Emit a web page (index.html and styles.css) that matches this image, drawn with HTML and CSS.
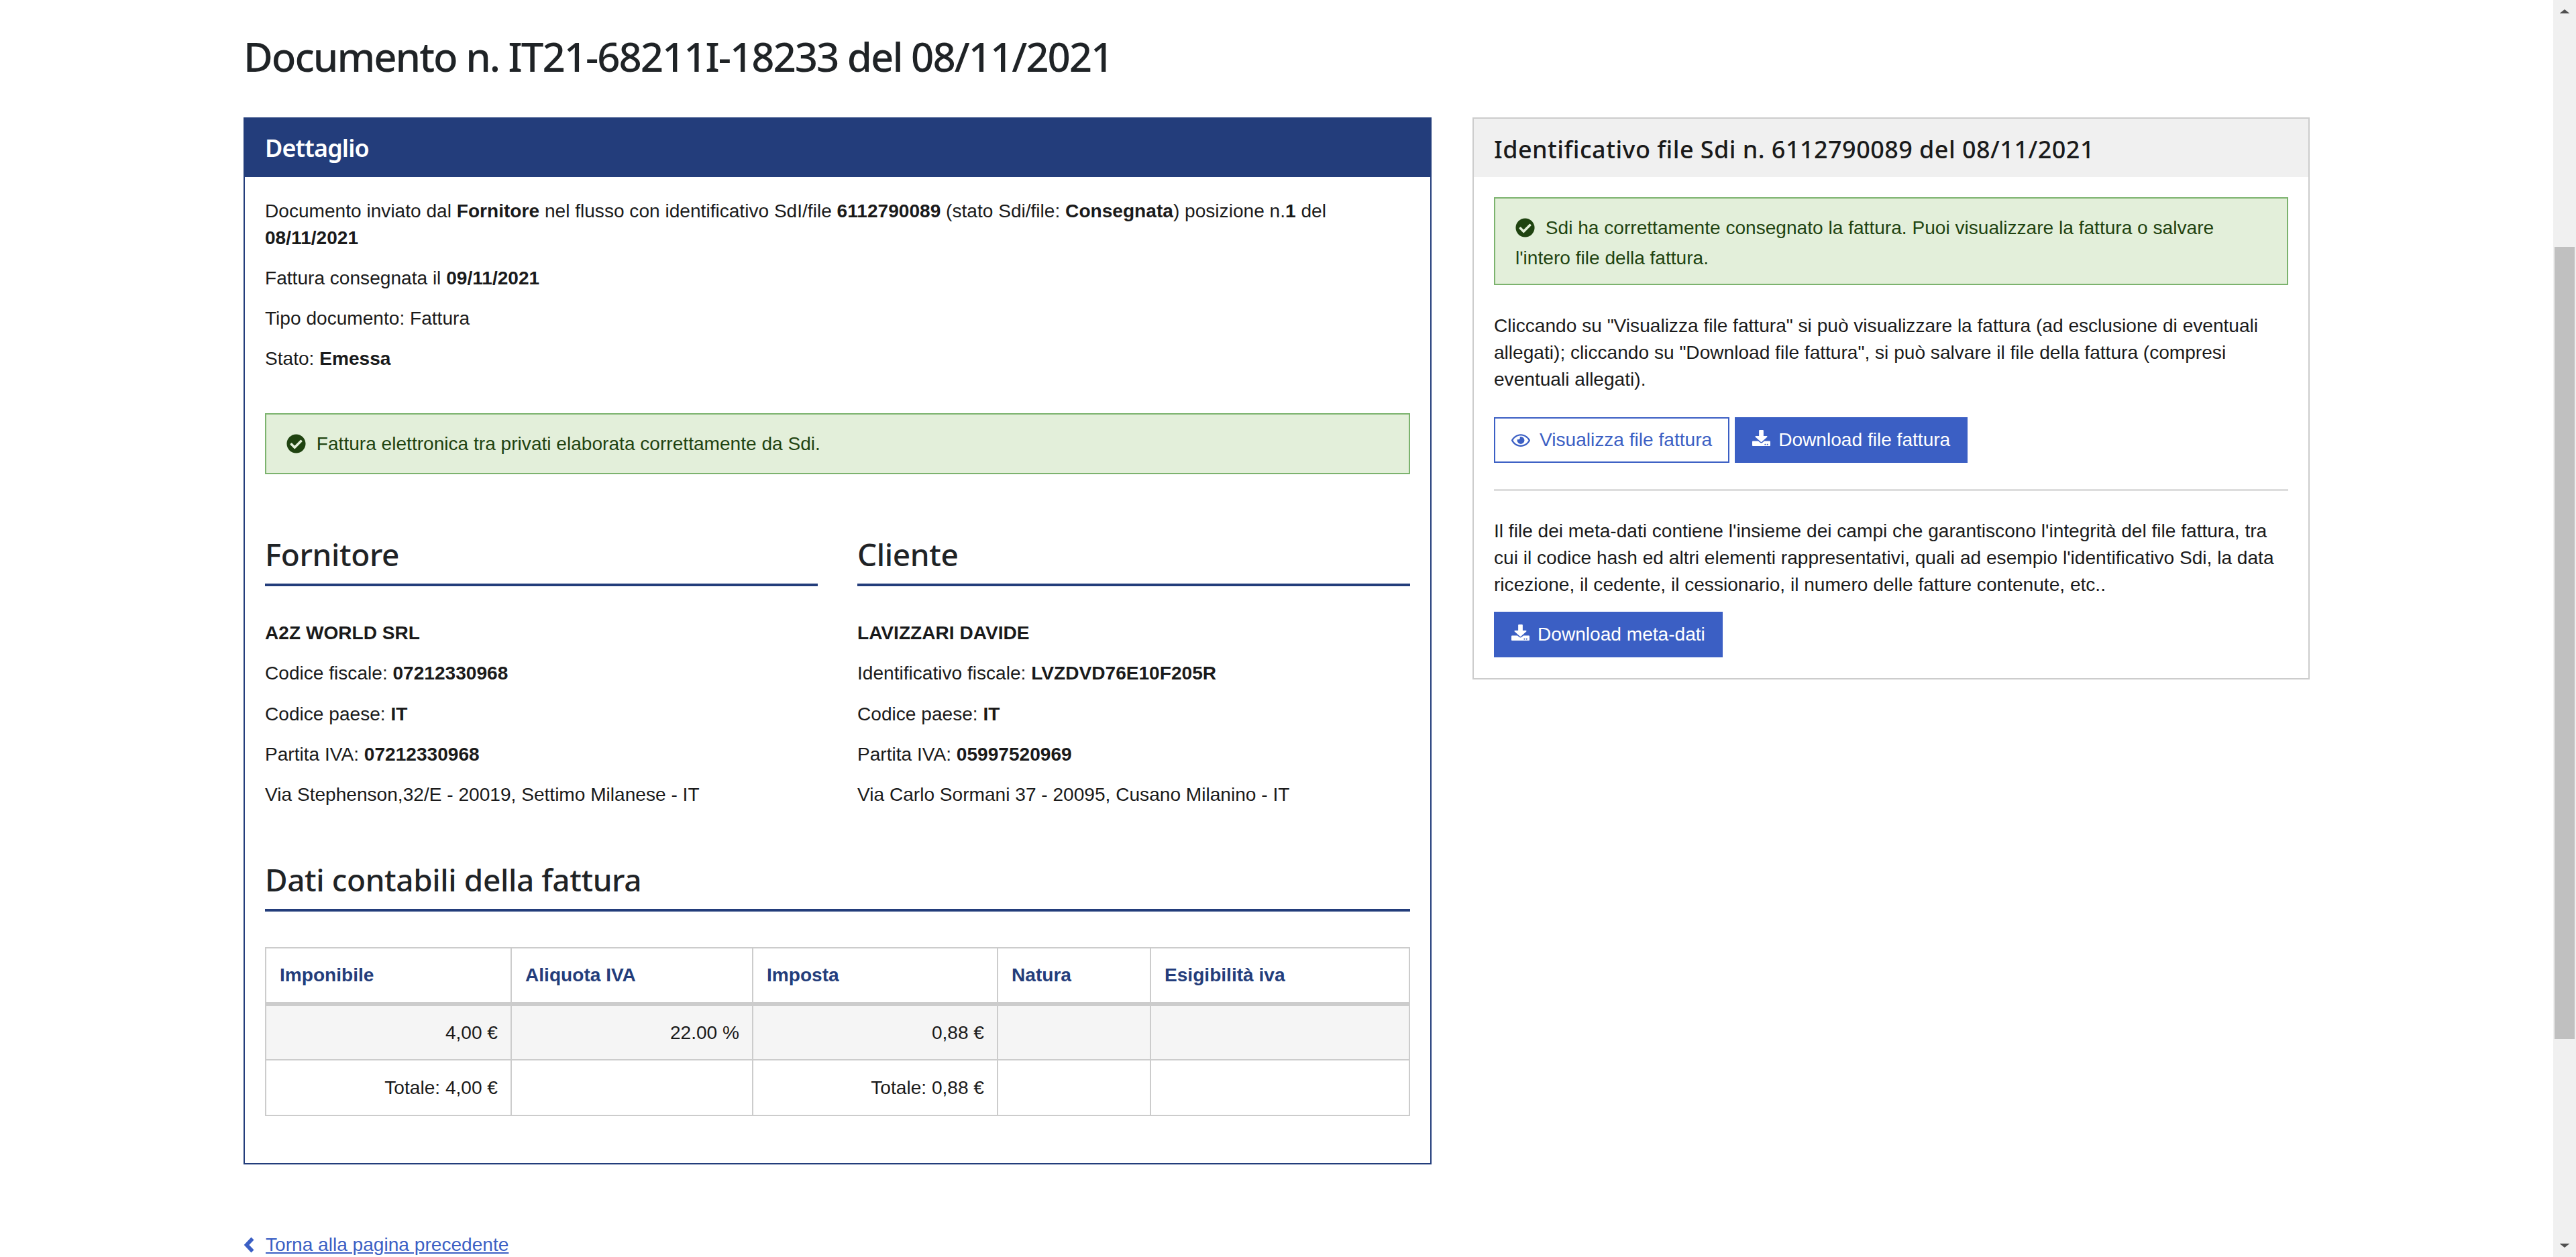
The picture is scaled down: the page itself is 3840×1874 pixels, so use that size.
FILE: index.html
```html
<!DOCTYPE html>
<html lang="it">
<head>
<meta charset="utf-8">
<title>Documento</title>
<link rel="stylesheet" href="styles.css">
</head>
<body>
<main class="page">
  <h1 class="title">Documento n. IT21-68211I-18233 del 08/11/2021</h1>
  <div class="columns">
    <section class="panel panel-main">
      <h2 class="panel-head">Dettaglio</h2>
      <div class="panel-body">
        <p>Documento inviato dal <b>Fornitore</b> nel flusso con identificativo SdI/file <b>6112790089</b> (stato Sdi/file: <b>Consegnata</b>) posizione n.<b>1</b> del <b>08/11/2021</b></p>
        <p>Fattura consegnata il <b>09/11/2021</b></p>
        <p>Tipo documento: Fattura</p>
        <p>Stato: <b>Emessa</b></p>
        <div class="alert alert-main">
          <svg class="icon icon-check" viewBox="0 0 512 512"><path d="M504 256c0 136.967-111.033 248-248 248S8 392.967 8 256 119.033 8 256 8s248 111.033 248 248zM227.314 387.314l184-184c6.248-6.248 6.248-16.379 0-22.627l-22.627-22.627c-6.248-6.249-16.379-6.249-22.628 0L216 308.118l-70.059-70.059c-6.248-6.248-16.379-6.248-22.628 0l-22.627 22.627c-6.248 6.248-6.248 16.379 0 22.627l104 104c6.249 6.249 16.379 6.249 22.628.001z"/></svg>
          Fattura elettronica tra privati elaborata correttamente da Sdi.
        </div>
        <div class="parties">
          <div class="party">
            <h3 class="section-title">Fornitore</h3>
            <p><b>A2Z WORLD SRL</b></p>
            <p>Codice fiscale: <b>07212330968</b></p>
            <p>Codice paese: <b>IT</b></p>
            <p>Partita IVA: <b>07212330968</b></p>
            <p>Via Stephenson,32/E - 20019, Settimo Milanese - IT</p>
          </div>
          <div class="party">
            <h3 class="section-title">Cliente</h3>
            <p><b>LAVIZZARI DAVIDE</b></p>
            <p>Identificativo fiscale: <b>LVZDVD76E10F205R</b></p>
            <p>Codice paese: <b>IT</b></p>
            <p>Partita IVA: <b>05997520969</b></p>
            <p>Via Carlo Sormani 37 - 20095, Cusano Milanino - IT</p>
          </div>
        </div>
        <h3 class="section-title section-accounts">Dati contabili della fattura</h3>
        <table class="data-table">
          <colgroup><col class="c1"><col class="c2"><col class="c3"><col class="c4"><col class="c5"></colgroup>
          <thead>
            <tr><th>Imponibile</th><th>Aliquota IVA</th><th>Imposta</th><th>Natura</th><th>Esigibilità iva</th></tr>
          </thead>
          <tbody>
            <tr class="odd"><td>4,00 €</td><td>22.00 %</td><td>0,88 €</td><td></td><td></td></tr>
            <tr><td>Totale: 4,00 €</td><td></td><td>Totale: 0,88 €</td><td></td><td></td></tr>
          </tbody>
        </table>
      </div>
    </section>
    <section class="panel panel-side">
      <h2 class="panel-head">Identificativo file Sdi n. 6112790089 del 08/11/2021</h2>
      <div class="panel-body">
        <div class="alert alert-side">
          <svg class="icon icon-check" viewBox="0 0 512 512"><path d="M504 256c0 136.967-111.033 248-248 248S8 392.967 8 256 119.033 8 256 8s248 111.033 248 248zM227.314 387.314l184-184c6.248-6.248 6.248-16.379 0-22.627l-22.627-22.627c-6.248-6.249-16.379-6.249-22.628 0L216 308.118l-70.059-70.059c-6.248-6.248-16.379-6.248-22.628 0l-22.627 22.627c-6.248 6.248-6.248 16.379 0 22.627l104 104c6.249 6.249 16.379 6.249 22.628.001z"/></svg>
          Sdi ha correttamente consegnato la fattura. Puoi visualizzare la fattura o salvare l'intero file della fattura.
        </div>
        <p>Cliccando su "Visualizza file fattura" si può visualizzare la fattura (ad esclusione di eventuali allegati); cliccando su "Download file fattura", si può salvare il file della fattura (compresi eventuali allegati).</p>
        <div class="actions">
          <a class="btn btn-outline" href="#"><svg class="icon icon-eye" viewBox="0 0 576 512" preserveAspectRatio="none"><path d="M288 144a110.94 110.94 0 0 0-31.24 5 55.4 55.4 0 0 1 7.24 27 56 56 0 0 1-56 56 55.4 55.4 0 0 1-27-7.24A111.71 111.71 0 1 0 288 144zm284.52 97.4C518.29 135.59 410.93 64 288 64S57.68 135.64 3.48 241.41a32.35 32.35 0 0 0 0 29.19C57.71 376.41 165.07 448 288 448s230.32-71.64 284.52-177.41a32.35 32.35 0 0 0 0-29.19zM288 400c-98.65 0-189.09-55-237.93-144C98.91 167 189.34 112 288 112s189.09 55 237.93 144C477.1 345 386.66 400 288 400z"/></svg>Visualizza file fattura</a>
          <a class="btn btn-solid" href="#"><svg class="icon icon-dl" viewBox="0 0 512 512" preserveAspectRatio="none"><path d="M216 0h80c13.3 0 24 10.7 24 24v168h87.7c17.8 0 26.7 21.5 14.1 34.1L269.7 378.3c-7.5 7.5-19.8 7.5-27.3 0L90.1 226.1c-12.6-12.6-3.7-34.1 14.1-34.1H192V24c0-13.3 10.7-24 24-24zm296 376v112c0 13.3-10.7 24-24 24H24c-13.3 0-24-10.7-24-24V376c0-13.3 10.7-24 24-24h146.7l49 49c20.1 20.1 52.5 20.1 72.6 0l49-49H488c13.3 0 24 10.7 24 24zm-124 88c0-11-9-20-20-20s-20 9-20 20 9 20 20 20 20-9 20-20zm64 0c0-11-9-20-20-20s-20 9-20 20 9 20 20 20 20-9 20-20z"/></svg>Download file fattura</a>
        </div>
        <hr class="divider">
        <p>Il file dei meta-dati contiene l'insieme dei campi che garantiscono l'integrità del file fattura, tra cui il codice hash ed altri elementi rappresentativi, quali ad esempio l'identificativo Sdi, la data ricezione, il cedente, il cessionario, il numero delle fatture contenute, etc..</p>
        <div class="actions actions-meta">
          <a class="btn btn-solid" href="#"><svg class="icon icon-dl" viewBox="0 0 512 512" preserveAspectRatio="none"><path d="M216 0h80c13.3 0 24 10.7 24 24v168h87.7c17.8 0 26.7 21.5 14.1 34.1L269.7 378.3c-7.5 7.5-19.8 7.5-27.3 0L90.1 226.1c-12.6-12.6-3.7-34.1 14.1-34.1H192V24c0-13.3 10.7-24 24-24zm296 376v112c0 13.3-10.7 24-24 24H24c-13.3 0-24-10.7-24-24V376c0-13.3 10.7-24 24-24h146.7l49 49c20.1 20.1 52.5 20.1 72.6 0l49-49H488c13.3 0 24 10.7 24 24zm-124 88c0-11-9-20-20-20s-20 9-20 20 9 20 20 20 20-9 20-20zm64 0c0-11-9-20-20-20s-20 9-20 20 9 20 20 20 20-9 20-20z"/></svg>Download meta-dati</a>
        </div>
      </div>
    </section>
  </div>
  <div class="back">
    <svg class="icon icon-back" viewBox="0 0 17 24"><path d="M13.5 2.500 4.500 12l9 9.500" fill="none" stroke="currentColor" stroke-width="5.500"/></svg>
    <a href="#">Torna alla pagina precedente</a>
  </div>
</main>
<aside class="scrollbar">
  <span class="arrow arrow-up"></span>
  <span class="thumb"></span>
  <span class="arrow arrow-down"></span>
</aside>
</body>
</html>
```
FILE: styles.css
```css
* { box-sizing: border-box; }
html, body { height: 100%; }
body {
  margin: 0;
  display: flex;
  height: 1874px;
  overflow: hidden;
  background: #fff;
  color: #1a1a1a;
  font-family: "Liberation Sans", Arial, sans-serif;
  font-size: 28.1px;
  line-height: 40px;
}
.page { flex: 1; min-width: 0; padding: 0 363px 0 363px; }
p { margin: 0 0 20px; }
b { font-weight: 700; }
.title {
  margin: 0;
  height: 175px;
  padding-top: 48px;
  font-family: "Noto Sans", sans-serif;
  font-weight: 500;
  font-size: 60px;
  line-height: 72px;
  letter-spacing: -2.05px;
  color: #1f2326;
}
.columns { display: flex; gap: 61px; align-items: flex-start; }
.panel { border: 2px solid #ccc; }
.panel-main { width: 1771px; height: 1561px; border-color: #233d7b; }
.panel-side { width: 1248px; }
.panel-head {
  margin: 0;
  height: 87px;
  padding: 0 30px;
  font-family: "Noto Sans", sans-serif;
  font-weight: 500;
  font-size: 36px;
  line-height: 91px;
  letter-spacing: 0.45px;
}
.panel-main .panel-head { background: #233d7b; color: #fff; margin: -2px -2px 0; height: 89px; padding: 0 32px; font-weight: 600; line-height: 92px; letter-spacing: -0.9px; }
.panel-side .panel-head { background: #f0f0f0; color: #1a1a1a; }
.panel-body { padding: 30px 30px 31px; }
.panel-main .panel-body { padding-top: 31px; }
.alert {
  border: 2px solid #7cb36e;
  background: #e3efda;
  color: #1f4310;
}
.alert-main { margin-top: 61px; height: 91px; padding: 24px 30px; margin-bottom: 0; }
.alert-side { height: 131px; padding: 22px 30px; line-height: 44.5px; margin-bottom: 41px; }
.icon { display: inline-block; vertical-align: middle; fill: currentColor; }
.icon-check { width: 29px; height: 29px; margin: -4px 8px 0 0; }
.icon-eye { width: 28px; height: 25px; margin: -3px 14px 0 0; }
.icon-dl { width: 27px; height: 24px; margin: -10px 12px 0 0; }
.parties { display: flex; gap: 59px; margin-top: 90px; }
.party { flex: 1; }
.party p { margin-bottom: 20.3px; }
.section-title {
  margin: 0 0 50px;
  height: 77px;
  border-bottom: 4px solid #233d7b;
  font-family: "Noto Sans", sans-serif;
  font-weight: 500;
  font-size: 46px;
  line-height: 58px;
  letter-spacing: -0.42px;
  color: #1f2326;
}
.section-accounts { margin: 57px 0 53px; height: 77px; }
.data-table {
  width: 100%;
  table-layout: fixed;
  border-collapse: collapse;
}
.c1 { width: 366px; }
.c2 { width: 360px; }
.c3 { width: 365px; }
.c4 { width: 228px; }
.data-table th, .data-table td { border: 2px solid #ccc; padding: 0 20px; }
.data-table th {
  height: 84px;
  text-align: left;
  font-weight: 700;
  color: #233d7b;
  border-bottom: 6px solid #ccc;
}
.data-table td { height: 83px; text-align: right; padding: 0 19px; }
.odd td { background: #f5f5f5; }
.btn {
  display: inline-block;
  height: 68px;
  padding: 0 24px;
  border: 2px solid #3b5fc4;
  line-height: 63px;
  text-decoration: none;
}
.btn-outline { background: #fff; color: #3b5fc4; }
.btn-solid { background: #3b5fc4; color: #fff; }
.actions { display: flex; gap: 8px; margin-top: 36px; }
.actions-meta { margin-top: 0; }
.divider { margin: 39px 0 40px; border: 0; border-top: 3px solid #ddd; }
.back { margin-top: 100px; display: flex; align-items: center; gap: 16px; color: #3b5fc4; }
.back a { color: #3b5fc4; }
.icon-back { width: 17px; height: 24px; margin: 0; }
.scrollbar {
  flex: 0 0 34px;
  display: flex;
  flex-direction: column;
  align-items: center;
  background: #f0f0f0;
  padding: 0 2px;
}
.thumb { width: 30px; height: 1181px; margin-top: 348px; background: #c0c0c0; }
.arrow { width: 15px; height: 6px; background: #505050; clip-path: polygon(50% 0, 100% 100%, 0 100%); margin-top: 14px; }
.arrow-down { margin-top: auto; margin-bottom: 14px; clip-path: polygon(0 0, 100% 0, 50% 100%); }
```
